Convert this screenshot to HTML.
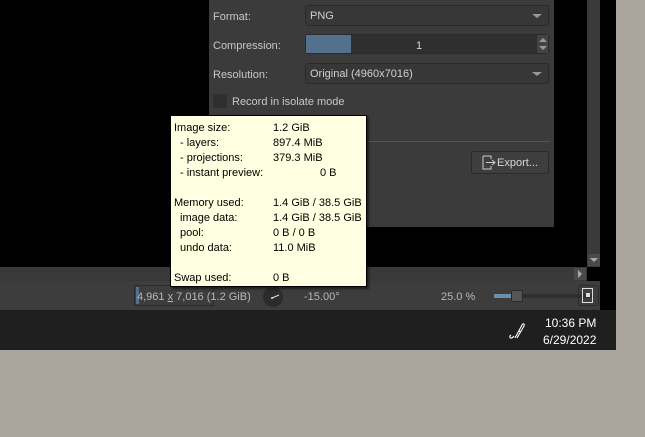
<!DOCTYPE html>
<html><head><style>
*{margin:0;padding:0;box-sizing:border-box}
body{width:645px;height:437px;background:#aaa69e;position:relative;overflow:hidden;font-family:"Liberation Sans",sans-serif;font-size:11px}
.a{position:absolute}
.t{color:#c8c8c8;white-space:nowrap}
.combo{position:absolute;background:#373737;border:1px solid #2a2a2a;border-radius:3px;color:#d0d0d0;padding-left:4px;line-height:20px}
.arr{position:absolute;right:6px;top:8px;width:0;height:0;border-left:5px solid transparent;border-right:5px solid transparent;border-top:4px solid #999}
.tip div{position:absolute;white-space:nowrap;color:#000}
</style></head><body>
<div class="a" style="left:0;top:0;width:616px;height:350px;background:#000"></div>
<div class="a" style="left:209px;top:0;width:345px;height:227px;background:#3b3b3b"></div>
<div class="a t" style="left:213px;top:11px">Format:</div>
<div class="combo" style="left:305px;top:5px;width:244px;height:21px">PNG<div class="arr"></div></div>
<div class="a t" style="left:213px;top:40px">Compression:</div>
<div class="a" style="left:305px;top:34px;width:244px;height:20px;background:#2f2f2f;border:1px solid #2a2a2a;border-radius:3px"></div>
<div class="a" style="left:306px;top:35px;width:45px;height:18px;background:#53718c"></div>
<div class="a t" style="left:416px;top:40px;color:#d8d8d8">1</div>
<div class="a" style="left:537px;top:35px;width:11px;height:18px;background:#444"></div>
<div class="a" style="left:539px;top:38px;border-left:4px solid transparent;border-right:4px solid transparent;border-bottom:4px solid #999"></div>
<div class="a" style="left:539px;top:46px;border-left:4px solid transparent;border-right:4px solid transparent;border-top:4px solid #999"></div>
<div class="a t" style="left:213px;top:69px">Resolution:</div>
<div class="combo" style="left:305px;top:63px;width:244px;height:21px">Original (4960x7016)<div class="arr"></div></div>
<div class="a" style="left:213px;top:94px;width:14px;height:14px;background:#2f2f2f"></div>
<div class="a t" style="left:232px;top:96px">Record in isolate mode</div>
<div class="a" style="left:366px;top:141px;width:184px;height:1px;background:#555"></div>
<div class="a" style="left:471px;top:151px;width:78px;height:23px;border:1px solid #2a2a2a;border-radius:3px;background:#3e3e3e"></div>
<svg class="a" style="left:482px;top:155px" width="14" height="15"><path d="M1 1h8v3M1 1v13h8v-3M4 7.5h9M10 5l3 2.5-3 2.5" stroke="#ccc" fill="none"/></svg>
<div class="a t" style="left:497px;top:157px;color:#d8d8d8">Export...</div>
<div class="a" style="left:587px;top:0;width:13px;height:267px;background:#3a3a3a"></div>
<div class="a" style="left:588px;top:254px;width:12px;height:12px;background:#4a4a4a"></div>
<div class="a" style="left:590px;top:258px;border-left:4px solid transparent;border-right:4px solid transparent;border-top:4px solid #aaa"></div>
<div class="a" style="left:0;top:267px;width:587px;height:14px;background:#393939"></div>
<div class="a" style="left:574px;top:268px;width:12px;height:12px;background:#4a4a4a"></div>
<div class="a" style="left:578px;top:270px;border-top:4px solid transparent;border-bottom:4px solid transparent;border-left:4px solid #aaa"></div>
<div class="a" style="left:0;top:281px;width:600px;height:29px;background:#3d3d3d"></div>
<div class="a" style="left:134px;top:285px;width:80px;height:21px;border:1px solid #2b2b2b"></div>
<div class="a" style="left:136px;top:287px;width:3px;height:17px;background:#53718c"></div>
<div class="a t" style="left:137px;top:291px;color:#b8b8b8">4,961 <u>x</u> 7,016 (1.2 GiB)</div>
<div class="a" style="left:263px;top:287px;width:20px;height:20px;border-radius:50%;background:#2b2b2b"></div>
<svg class="a" style="left:263px;top:287px" width="20" height="20"><path d="M9 11L16 8" stroke="#ddd" stroke-width="1.2"/><circle cx="9" cy="11" r="1" fill="#ddd"/></svg>
<div class="a t" style="left:304px;top:291px;color:#b8b8b8">-15.00°</div>
<div class="a t" style="left:441px;top:291px;color:#b8b8b8">25.0 %</div>
<div class="a" style="left:494px;top:294px;width:100px;height:4px;background:#2f2f2f;border-radius:2px"></div>
<div class="a" style="left:494px;top:294px;width:20px;height:4px;background:#6d8fae"></div>
<div class="a" style="left:511px;top:290px;width:12px;height:12px;background:#555;border:1px solid #2b2b2b;border-radius:2px"></div>
<div class="a" style="left:578px;top:285px;width:21px;height:21px;border:1px solid #2b2b2b;border-radius:3px"></div>
<div class="a" style="left:582px;top:288px;width:11px;height:15px;border:1px solid #ddd"></div>
<div class="a" style="left:586px;top:293px;width:4px;height:4px;background:#ddd"></div>
<div class="a" style="left:0;top:310px;width:616px;height:40px;background:#1f1f1f"></div>
<svg class="a" style="left:507px;top:321px" width="18" height="20"><path d="M4 14c-3 2 0 5 3 1M8 17L15 4c1-2 3-1 2 1L10 17M11 10l3 1" stroke="#fff" stroke-width="1.1" fill="none"/></svg>
<div class="a" style="left:545px;top:316px;color:#fff;font-size:12px">10:36 PM</div>
<div class="a" style="left:543px;top:333px;color:#fff;font-size:12px">6/29/2022</div>
<div class="a tip" style="left:170px;top:115px;width:197px;height:172px;background:#ffffe1;border:1px solid #000;box-shadow:2px 2px 2px rgba(0,0,0,.5)">
<div style="left:3px;top:6px">Image size:</div><div style="left:102px;top:6px">1.2 GiB</div>
<div style="left:9px;top:21px">- layers:</div><div style="left:102px;top:21px">897.4 MiB</div>
<div style="left:9px;top:36px">- projections:</div><div style="left:102px;top:36px">379.3 MiB</div>
<div style="left:9px;top:51px">- instant preview:</div><div style="left:149px;top:51px">0 B</div>
<div style="left:3px;top:81px">Memory used:</div><div style="left:102px;top:81px">1.4 GiB / 38.5 GiB</div>
<div style="left:9px;top:96px">image data:</div><div style="left:102px;top:96px">1.4 GiB / 38.5 GiB</div>
<div style="left:9px;top:111px">pool:</div><div style="left:102px;top:111px">0 B / 0 B</div>
<div style="left:9px;top:126px">undo data:</div><div style="left:102px;top:126px">11.0 MiB</div>
<div style="left:3px;top:156px">Swap used:</div><div style="left:102px;top:156px">0 B</div>
</div>
</body></html>
